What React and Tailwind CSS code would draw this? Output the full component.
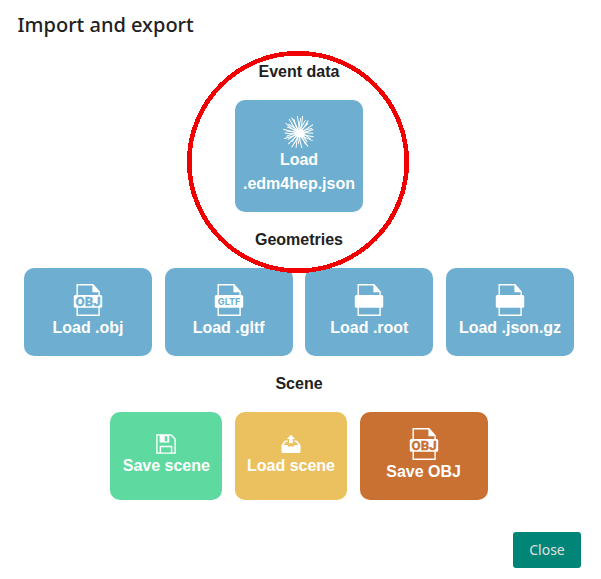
import React from 'react';

const TITLE_FONT = "font-['Noto_Sans',sans-serif]";

function FileIcon({ label, color, size, y, width, font, weight = 0 }) {
  return (
    <svg className="block h-8 w-8 shrink-0" viewBox="0 0 32 32">
      <path d="M5.2 .7H21L27.1 7.8V31.3H5.2Z" fill="none" stroke="#fff" strokeWidth="1.4" />
      <path d="M20.4 .2L27.6 8.2H20.4Z" fill="#fff" />
      <rect x="1.8" y="11" width="28.4" height="12.8" rx="1.6" fill="#fff" />
      {label && (
        <text
          x="16.1"
          y={y}
          textAnchor="middle"
          textLength={width}
          lengthAdjust="spacingAndGlyphs"
          fontFamily={font}
          fontWeight="700"
          fontSize={size}
          fill={color}
          stroke={color}
          strokeWidth={weight}
        >
          {label}
        </text>
      )}
    </svg>
  );
}

function ObjIcon({ color }) {
  return <FileIcon label="OBJ" color={color} size={13.4} y={22.1} width={25} weight={0.4} font="Roboto, sans-serif" />;
}

// Ray lengths and angles (degrees) of the particle burst.
const rays = [
  [4, 14], [13, 15], [25, 13], [33, 15.5], [46, 12], [55, 16], [64, 13], [78, 16],
  [92, 11], [104, 16.5], [116, 16], [128, 11], [138, 15.5], [148, 13], [158, 16],
  [169, 13], [178, 14.5], [187, 13], [196, 16.5], [205, 13.5], [214, 17], [223, 14], [232, 17],
  [242, 17], [252, 15], [262, 17], [274, 15], [284, 17.5], [294, 14],
  [304, 15.5], [316, 13], [327, 16], [338, 13.5], [349, 14.5],
];

function BurstIcon() {
  return (
    <svg className="block h-8 w-8 shrink-0" viewBox="0 0 32 32">
      <g fill="none" stroke="#fff" strokeWidth="1" strokeLinecap="round">
        {rays.map(([angle, length], i) => (
          <path
            key={angle}
            transform={`translate(16.2 17) rotate(${angle})`}
            d={`M0 0Q${length / 2} ${i % 2 ? 1.2 : -1.2} ${length - 0.3} ${i % 3 ? 0.5 : -0.8}`}
          />
        ))}
      </g>
      <ellipse cx="17" cy="17.6" rx="5" ry="4" fill="#fff" />
    </svg>
  );
}

function SaveIcon() {
  return (
    <svg className="block h-5 w-5 shrink-0" viewBox="0 0 20 20">
      <path d="M.9 .9H15L19.1 5V19.1H.9Z" fill="none" stroke="#fff" strokeWidth="1.4" />
      <path fillRule="evenodd" d="M3.6 1H13.3V8.4H3.6ZM8.7 2.2H11.3V7.2H8.7Z" fill="#fff" />
      <path d="M4.4 19V12.4H15.6V19" fill="none" stroke="#fff" strokeWidth="1.5" />
    </svg>
  );
}

function LoadIcon() {
  return (
    <svg className="block h-5 w-5 shrink-0" viewBox="0 0 20 20">
      <path d="M10 .8L14.2 5H11.8V9.2H8.2V5H5.8Z" fill="#fff" />
      <path d="M.5 11L3.6 7Q4 6.5 4.8 6.5H6.8V7.8H5L2.7 11H6.2L7.2 12.6H12.8L13.8 11H17.3L15 7.8H13.2V6.5H15.2Q16 6.5 16.4 7L19.5 11V17.7Q19.5 19 18.2 19H1.8Q.5 19 .5 17.7Z" fill="#fff" />
    </svg>
  );
}

function Tile({ className, icon, children }) {
  return (
    <button
      className={`flex shrink-0 flex-col items-center rounded-[10px] text-base leading-6 font-bold text-white ${className}`}
    >
      {icon}
      <span className="whitespace-nowrap">{children}</span>
    </button>
  );
}

function Heading({ children }) {
  return <h2 className="text-center text-base leading-6 font-bold text-[#212121]">{children}</h2>;
}

export default function App() {
  return (
    <main className="relative h-[579px] w-[601px] overflow-hidden bg-white font-['Liberation_Sans',sans-serif]">
      <h1 className={`h-[60px] pt-[10px] pl-[17.5px] text-xl leading-[30px] font-medium text-[#212121] ${TITLE_FONT}`}>
        Import and export
      </h1>
      <div className="flex w-[598px] flex-col gap-4">
        <Heading>Event data</Heading>
        <div className="flex justify-center">
          <Tile className="h-28 w-32 bg-[#6eaed0] pt-4" icon={<BurstIcon />}>
            <span className="block">Load</span>
            <span className="block">.edm4hep.json</span>
          </Tile>
        </div>
        <Heading>Geometries</Heading>
        <div className="flex justify-center gap-[12.67px]">
          <Tile className="h-[88px] w-32 bg-[#6eaed0] pt-4" icon={<ObjIcon color="#6eaed0" />}>
            Load .obj
          </Tile>
          <Tile
            className="h-[88px] w-32 bg-[#6eaed0] pt-4"
            icon={<FileIcon label="GLTF" color="#6eaed0" size={9} y={20.9} width={22.5} font="Inter, sans-serif" />}
          >
            Load .gltf
          </Tile>
          <Tile className="h-[88px] w-32 bg-[#6eaed0] pt-4" icon={<FileIcon />}>
            Load .root
          </Tile>
          <Tile className="h-[88px] w-32 bg-[#6eaed0] pt-4" icon={<FileIcon />}>
            Load .json.gz
          </Tile>
        </div>
        <Heading>Scene</Heading>
        <div className="flex justify-center gap-[12.67px]">
          <Tile className="h-[88px] w-28 bg-[#5edaa0] pt-[22px]" icon={<SaveIcon />}>
            Save scene
          </Tile>
          <Tile className="h-[88px] w-28 bg-[#ebc15f] pt-[22px]" icon={<LoadIcon />}>
            Load scene
          </Tile>
          <Tile className="h-[88px] w-32 bg-[#c97033] pt-4" icon={<ObjIcon color="#c97033" />}>
            Save OBJ
          </Tile>
        </div>
      </div>
      <footer className="flex justify-end pt-8 pr-5">
        <button className={`h-9 w-[68px] rounded-[3px] bg-[#008577] text-sm text-[#e0e0e0] ${TITLE_FONT}`}>
          Close
        </button>
      </footer>
      <svg className="pointer-events-none absolute top-[50px] left-[186px] h-56 w-56" viewBox="0 0 224 224">
        <circle cx="112" cy="112" r="108.8" fill="none" stroke="#f00000" strokeWidth="4.6" shapeRendering="crispEdges" />
      </svg>
    </main>
  );
}
